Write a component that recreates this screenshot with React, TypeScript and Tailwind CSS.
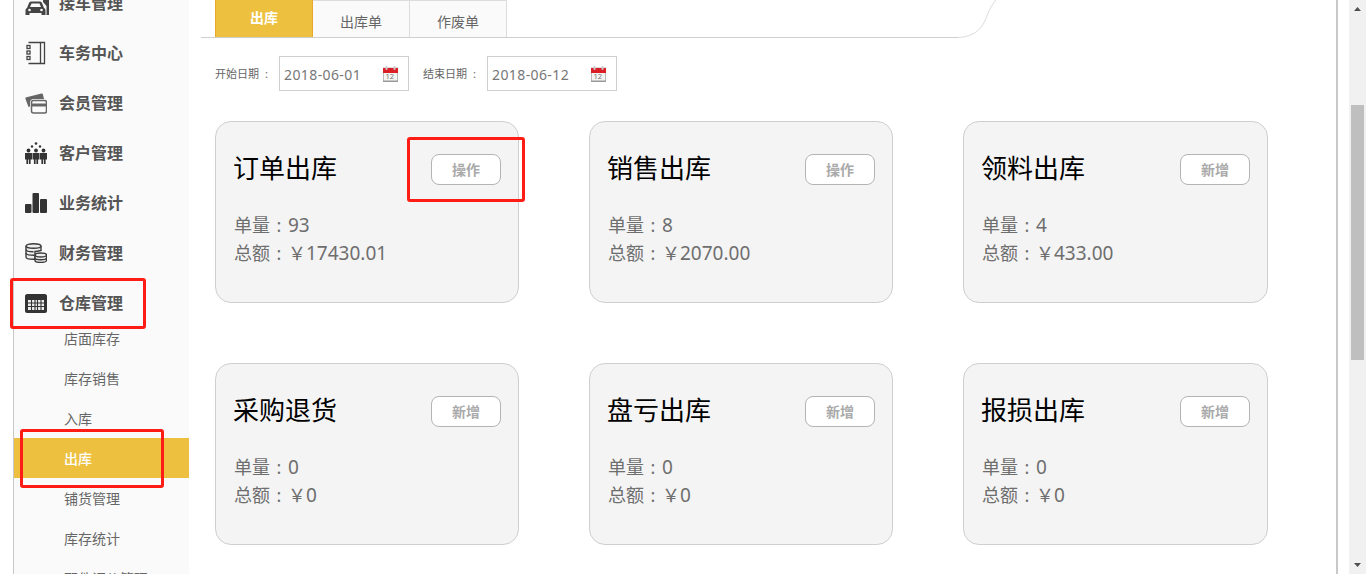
import React from 'react';

const FONT = 'font-["Noto_Sans","Noto_Sans_CJK_SC",sans-serif]';

const CarIcon = () => (
  <svg width="24" height="24" viewBox="0 0 24 24" fill="#444">
    <path d="M2 17l2-5c.3-.7 1-1.500 2-1.500h9c1 0 1.700.8 2 1.500l2 5c1 .5 1.500 1.200 1.500 2.500v4.500h-4v-2H4.500v2H.5v-4.500c0-1.300.5-2 1.500-2.500z" />
    <path d="M5 16l1.500-3.500h8L16 16z" fill="#fafafa" />
    <circle cx="4.500" cy="19" r="1.300" fill="#fafafa" />
    <circle cx="16.500" cy="19" r="1.300" fill="#fafafa" />
    <path d="M18 0h6v24h-2.500v-9l-3.500-4z" />
  </svg>
);

const BookIcon = () => (
  <svg width="22" height="24" viewBox="0 0 22 24" fill="none" stroke="#444" strokeWidth="1.300">
    <path d="M3.500 1.500h16v21h-16" />
    <path d="M15.500 1.500v21" />
    <rect x="2" y="4.500" width="3" height="3" fill="#fafafa" />
    <rect x="2" y="10" width="3" height="3" fill="#fafafa" />
    <rect x="2" y="15.500" width="3" height="3" fill="#fafafa" />
  </svg>
);

const CardsIcon = () => (
  <svg width="22" height="22" viewBox="0 0 22 22">
    <path d="M.5 5.500L16.500 1.500c.7-.2 1.200.1 1.400.7L19 7H8.500C6.500 7 5 8.500 5 10.500v4L3.500 15 .5 7z" fill="#666" />
    <rect x="6.500" y="8.500" width="15" height="12.500" rx="2" fill="#fafafa" stroke="#666" strokeWidth="1.500" />
    <rect x="6.500" y="11.500" width="15" height="3" fill="#666" />
  </svg>
);

const PeopleIcon = () => (
  <svg width="22" height="22" viewBox="0 0 22 22" fill="#333">
    <circle cx="11" cy="1.500" r="1.300" />
    <circle cx="7" cy="4.500" r="1.200" />
    <circle cx="15" cy="4.500" r="1.200" />
    {[3.500, 11, 18.500].map((x) => (
      <g key={x}>
        <circle cx={x} cy="8.500" r="1.900" />
        <path d={`M${x - 3.500} 11h7v6.500h-1.400v4.500h-1.700v-4.500h-.800v4.500h-1.700v-4.500H${x - 3.500}z`} />
      </g>
    ))}
  </svg>
);

const BarsIcon = () => (
  <svg width="22" height="20" viewBox="0 0 22 20" fill="#333">
    <rect x="0" y="11" width="6.500" height="9" rx="1" />
    <rect x="7.500" y="0" width="6.500" height="20" rx="1" />
    <rect x="15" y="6" width="7" height="14" rx="1" />
  </svg>
);

const CoinsIcon = () => (
  <svg width="22" height="20" viewBox="0 0 22 20" fill="#eee" stroke="#3c3c3c" strokeWidth="1.400">
    <path d="M1 3v11c0 1.300 2.500 2.200 7 2.200h2V8.500c2 0 4-.5 6-1V3" />
    <ellipse cx="8.500" cy="3" rx="7.500" ry="2.300" />
    <path d="M1 6.500c0 1.300 3 2.200 7.500 2.200M1 10c0 1.300 3 2.200 8 2.200M1 13.500" fill="none" />
    <path d="M10 12v5.500c0 1 2.500 1.900 5.800 1.900s5.700-.9 5.700-1.900V12" />
    <ellipse cx="15.800" cy="12" rx="5.700" ry="2" />
    <path d="M10 15c0 1 2.500 1.800 5.800 1.800s5.700-.8 5.700-1.800" fill="none" />
  </svg>
);

const StoreIcon = () => (
  <svg width="22" height="20" viewBox="0 0 22 20">
    <path d="M2 1h18c1 0 2 1 2 2v15c0 1-1 2-2 2H2c-1 0-2-1-2-2V3c0-1 1-2 2-2z" fill="#333" />
    <rect x="3" y="7" width="16" height="10" fill="#eee" />
    <path d="M3 10h16M3 13.500h16M6.500 7v10M10 7v10M12.500 7v10M16 7v10" stroke="#333" strokeWidth="1.100" />
  </svg>
);

const CalendarIcon = () => (
  <svg width="15" height="16" viewBox="0 0 15 16" className="shrink-0">
    <rect x="0.500" y="2" width="14" height="13.500" fill="#f4f4f0" stroke="#bbb" strokeWidth="1" />
    <rect x="0" y="2" width="15" height="5" fill="#dc1f26" />
    <rect x="2.500" y="0" width="2" height="4" rx="1" fill="#ccc" />
    <rect x="10.500" y="0" width="2" height="4" rx="1" fill="#ccc" />
    <text x="2.500" y="13" fontSize="7.500" fill="#777">12</text>
    <rect x="0" y="14.500" width="15" height="1.500" fill="#999" />
  </svg>
);

const menu = [
  { label: '接车管理', icon: <CarIcon /> },
  { label: '车务中心', icon: <BookIcon /> },
  { label: '会员管理', icon: <CardsIcon /> },
  { label: '客户管理', icon: <PeopleIcon /> },
  { label: '业务统计', icon: <BarsIcon /> },
  { label: '财务管理', icon: <CoinsIcon /> },
  { label: '仓库管理', icon: <StoreIcon /> },
];

const subMenu = ['店面库存', '库存销售', '入库', '出库', '铺货管理', '库存统计', '配件调价管理'];

const cards = [
  { title: '订单出库', action: '操作', count: '93', total: '17430.01' },
  { title: '销售出库', action: '操作', count: '8', total: '2070.00' },
  { title: '领料出库', action: '新增', count: '4', total: '433.00' },
  { title: '采购退货', action: '新增', count: '0', total: '0' },
  { title: '盘亏出库', action: '新增', count: '0', total: '0' },
  { title: '报损出库', action: '新增', count: '0', total: '0' },
];

const Sidebar = () => (
  <div className="relative w-[176px] shrink-0 overflow-hidden border-l border-[#c8c8c8] bg-[#fafafa]">
    <div className="-mt-[22px]">
      {menu.map((item) => (
        <div key={item.label} className="flex h-[50px] items-center pl-[11px]">
          <span className="flex w-[34px] shrink-0">{item.icon}</span>
          <span className="text-base font-bold text-[#555]">{item.label}</span>
        </div>
      ))}
      <div className="-mt-[10px]">
        {subMenu.map((name) => (
          <div
            key={name}
            className={`flex h-10 items-center pl-[50px] pt-[2px] text-sm ${
              name === '出库' ? 'bg-[#edc13f] font-medium text-white' : 'text-[#666]'
            }`}
          >
            {name}
          </div>
        ))}
      </div>
    </div>
  </div>
);

const Tabs = () => (
  <div className="relative ml-3 h-[38px] w-[757px] border-b border-[#cfcfcf]">
    <div className="ml-[14px] flex h-[37px]">
      <div className="flex w-[98px] justify-center border-x border-[#e8a92a] bg-[#edc13f] pt-[9px] text-sm font-bold leading-[18px] text-white">
        出库
      </div>
      <div className="flex w-[97px] justify-center border-t border-r border-[#dcdcdc] bg-[#fafafa] pt-3 text-sm leading-[18px] text-[#666]">
        出库单
      </div>
      <div className="flex w-[97px] justify-center border-t border-r border-[#dcdcdc] bg-[#fafafa] pt-3 text-sm leading-[18px] text-[#666]">
        作废单
      </div>
    </div>
    {/* the line curves up and out of the page at the end of the tab strip */}
    <svg
      width="40"
      height="38"
      viewBox="0 0 40 38"
      fill="none"
      stroke="#dcdcdc"
      className="absolute left-[757px] top-0"
    >
      <path d="M0 37.500C12 37 20 32 24 26C28 20 30 12 33 7C35 4 36 2 38 0" />
    </svg>
  </div>
);

const DateField = ({ label, value }: { label: string; value: string }) => (
  <div className="flex items-center">
    <span className="flex w-[64px] pt-[2px] text-[11px] text-[#666]">
      {label}
      <span className="w-[15px] text-center">:</span>
    </span>
    <div className="flex h-[35px] w-[130px] items-center justify-between border border-[#cfcfcf] pl-1 pr-[10px]">
      <span className="pt-[2px] text-sm tracking-[0.4px] text-[#777]">{value}</span>
      <CalendarIcon />
    </div>
  </div>
);

const Card = ({ title, action, count, total }: (typeof cards)[number]) => (
  <div className="h-[182px] rounded-[16px] border border-[#cfcfcf] bg-[#f4f4f4] pl-[18px] pr-[17px]">
    <div className="mt-8 flex h-[31px] items-center justify-between">
      <span className="-ml-px pb-[2px] text-[26px] leading-[31px] text-black">{title}</span>
      <button className="h-[31px] w-[70px] rounded-[8px] border border-[#b4b4b4] bg-white text-sm font-bold text-[#aaa]">
        {action}
      </button>
    </div>
    <div className="mt-[26px] text-lg leading-[28px] text-[#6e6e6e]">
      <div className="flex items-baseline">
        单量<span className="w-[18px] text-center">:</span>
        <span className="text-[19px]">{count}</span>
      </div>
      <div className="flex items-baseline">
        总额<span className="w-[18px] text-center">:</span>
        <span>￥</span>
        <span className="text-[19px]">{total}</span>
      </div>
    </div>
  </div>
);

const Scrollbar = () => (
  <div className="flex w-[17px] shrink-0 flex-col items-center bg-[#f1f1f1]">
    <svg width="9" height="6" viewBox="0 0 9 6" fill="#505050" className="mt-[6px]">
      <path d="M4.500 1L8 5H1z" />
    </svg>
    <div className="mt-[93px] h-[255px] w-[13px] bg-[#bfbfbf]" />
    <svg width="9" height="6" viewBox="0 0 9 6" fill="#505050" className="mt-auto mb-[6px]">
      <path d="M4.500 5L1 1h7z" />
    </svg>
  </div>
);

const App = () => {
  return (
    <div className={`relative flex h-[574px] w-[1366px] overflow-hidden bg-white ${FONT}`}>
      <div className="w-[13px] shrink-0" />
      <Sidebar />
      <div className="w-[1149px] shrink-0 border-r-2 border-[#c8c8c8]">
        <Tabs />
        <div className="ml-[26px] mt-[18px] flex gap-[14px]">
          <DateField label="开始日期" value="2018-06-01" />
          <DateField label="结束日期" value="2018-06-12" />
        </div>
        <div className="ml-[26px] mt-[30px] grid w-[1053px] grid-cols-[304px_304px_305px] gap-x-[70px] gap-y-[60px]">
          {cards.map((card) => (
            <Card key={card.title} {...card} />
          ))}
        </div>
      </div>
      <div className="w-[11px] shrink-0" />
      <Scrollbar />

      {/* red annotation boxes drawn on top of the screenshot */}
      <div className="absolute left-[10px] top-[278px] h-[51px] w-[136px] rounded-[3px] border-[3px] border-[#fe1c14]" />
      <div className="absolute left-[20px] top-[429px] h-[59px] w-[144px] rounded-[3px] border-[3px] border-[#fe1c14]" />
      <div className="absolute left-[407px] top-[137px] h-[65px] w-[118px] rounded-[3px] border-[3px] border-[#fe1c14]" />
    </div>
  );
};

export default App;
